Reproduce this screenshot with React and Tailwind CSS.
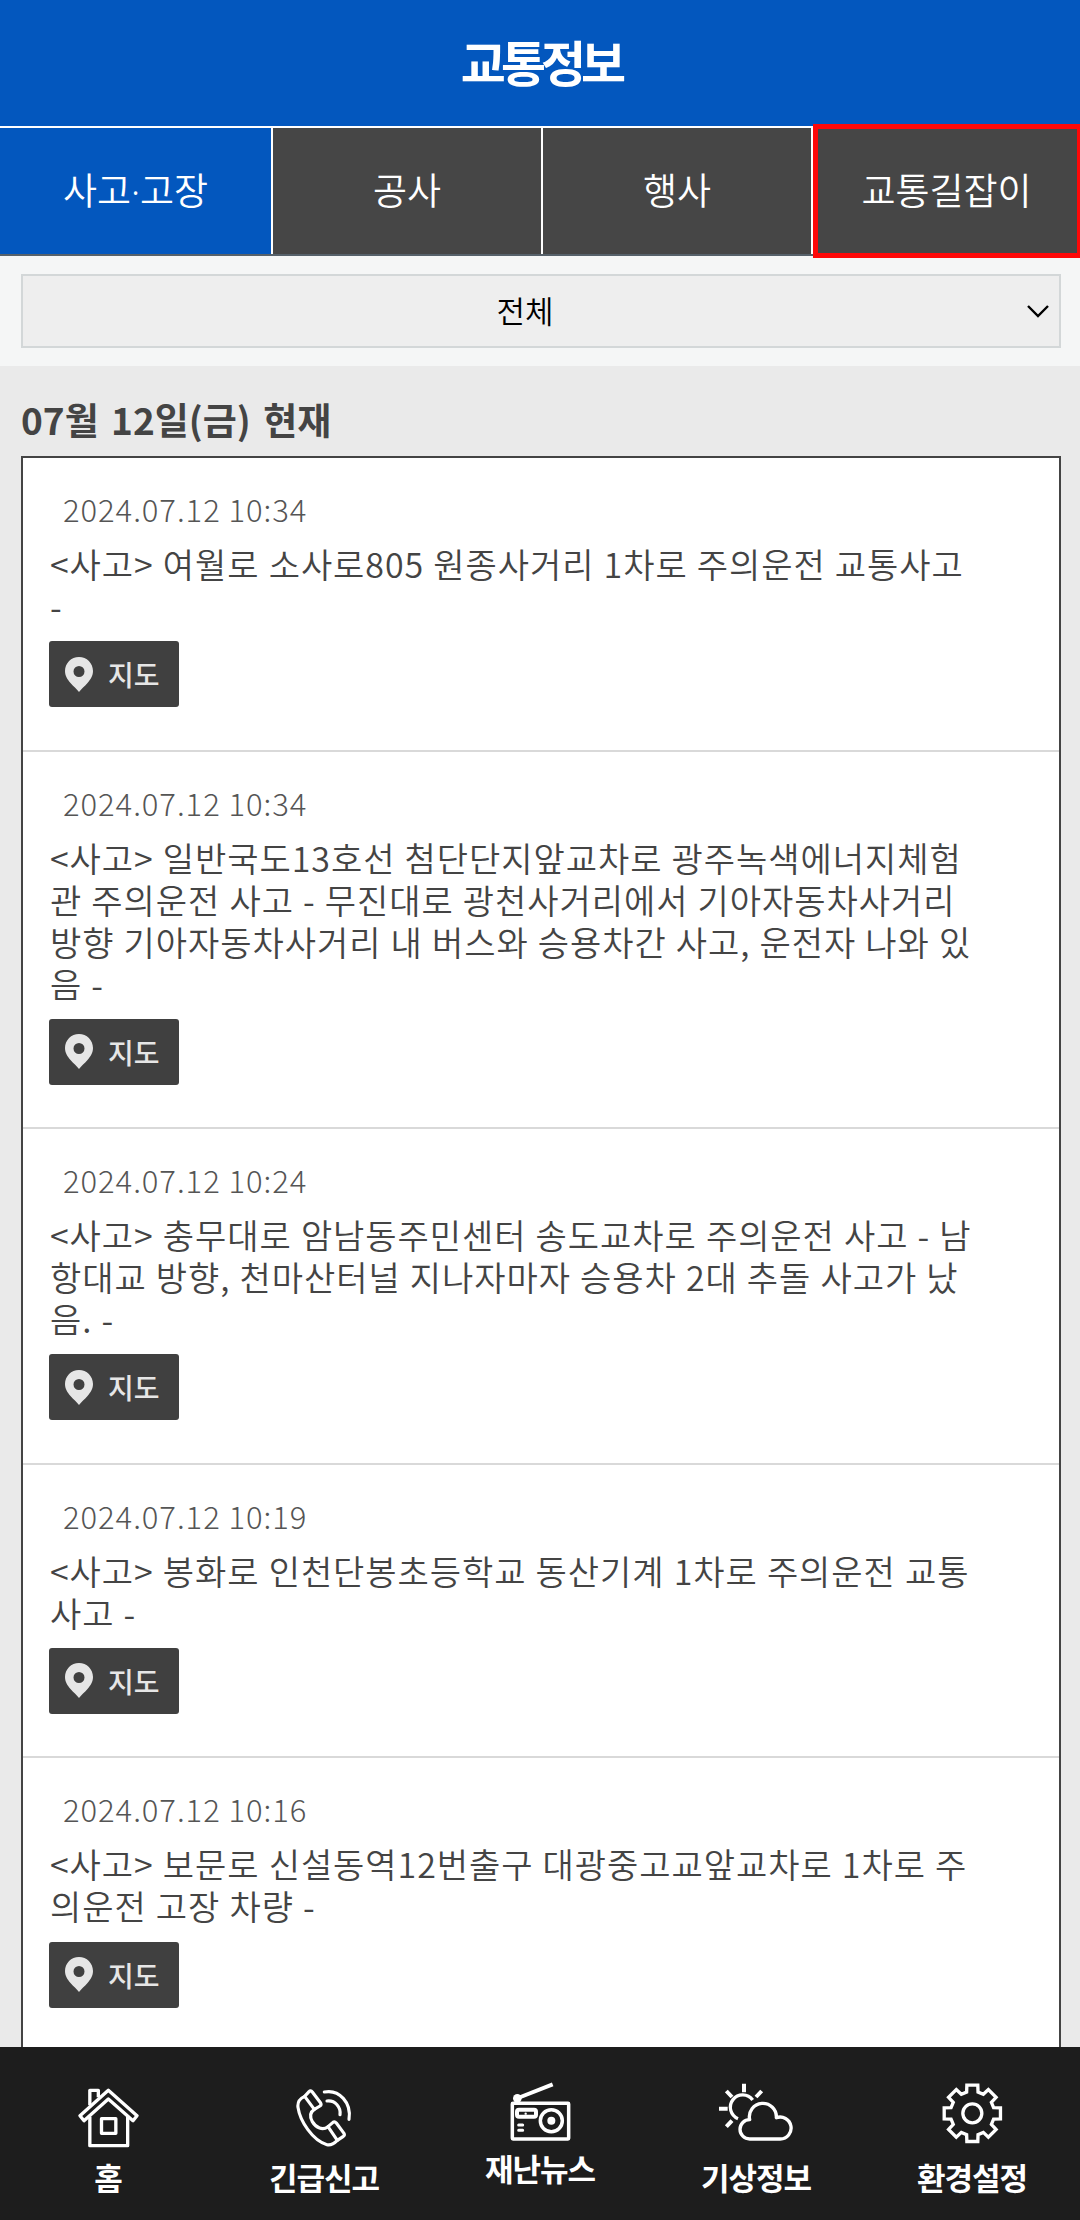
import React, { useState } from 'react';

const tabs = [
  { label: '사고·고장', width: 'w-[273px]' },
  { label: '공사', width: 'w-[270px]' },
  { label: '행사', width: 'w-[270px]' },
  { label: '교통길잡이', width: 'w-[267px]' },
];

const incidents = [
  {
    date: '2024.07.12 10:34',
    lines: ['<사고> 여월로 소사로805 원종사거리 1차로 주의운전 교통사고', '-'],
  },
  {
    date: '2024.07.12 10:34',
    lines: [
      '<사고> 일반국도13호선 첨단단지앞교차로 광주녹색에너지체험',
      '관 주의운전 사고 - 무진대로 광천사거리에서 기아자동차사거리',
      '방향 기아자동차사거리 내 버스와 승용차간 사고, 운전자 나와 있',
      '음 -',
    ],
  },
  {
    date: '2024.07.12 10:24',
    lines: [
      '<사고> 충무대로 암남동주민센터 송도교차로 주의운전 사고 - 남',
      '항대교 방향, 천마산터널 지나자마자 승용차 2대 추돌 사고가 났',
      '음. -',
    ],
  },
  {
    date: '2024.07.12 10:19',
    lines: ['<사고> 봉화로 인천단봉초등학교 동산기계 1차로 주의운전 교통', '사고 -'],
  },
  {
    date: '2024.07.12 10:16',
    lines: ['<사고> 보문로 신설동역12번출구 대광중고교앞교차로 1차로 주', '의운전 고장 차량 -'],
  },
];

// Outline of the eight-toothed gear, centred on 91,91
const gearPoints = Array.from({ length: 8 }, (_, i) =>
  [[-15, 66], [-11, 86], [11, 86], [15, 66]]
    .map(([deg, r]) => {
      const a = ((i * 45 + deg) * Math.PI) / 180;
      return `${(91 + r * Math.sin(a)).toFixed(1)},${(91 - r * Math.cos(a)).toFixed(1)}`;
    })
    .join(' ')
).join(' ');

function HomeIcon() {
  return (
    <svg viewBox="0 0 183 180" className="h-[60px] w-[61px]" fill="none" stroke="white" strokeWidth="10" strokeLinejoin="round">
      <path d="M35.5 52V7H61V28" />
      <path d="M91 7L177 83L165 98L91 33L18 98L6 83Z" />
      <path d="M35.5 86V173H149V86" />
      <rect x="70.5" y="92" width="43" height="44" />
    </svg>
  );
}

function PhoneIcon() {
  return (
    <svg viewBox="0 0 171 177" className="h-[59px] w-[57px]" fill="none" stroke="white" strokeWidth="9.5" strokeLinejoin="round" strokeLinecap="round">
      <path d="M26 25L39 11Q44 6 49 12L74 45Q77 50 72 54L55 64Z" />
      <path d="M96 116L111 103Q116 99 121 105L144 136Q147 141 142 145L124 157Z" />
      <path d="M26 25C9 33 4 42 6 58C12 99 50 158 93 170C105 173 115 166 124 157" />
      <path d="M55 64C40 74 42 88 49 101C60 120 80 128 96 116" />
      <path d="M85 12C130 3 167 45 159 94" />
      <path d="M93 39C118 36 135 58 132 80" />
    </svg>
  );
}

function RadioIcon() {
  return (
    <svg viewBox="0 0 183 177" className="h-[59px] w-[61px]" fill="none" stroke="white" strokeWidth="10.5" strokeLinejoin="round">
      <path d="M24 48L128 7" strokeWidth="12" />
      <circle cx="22" cy="49" r="13" fill="white" stroke="none" />
      <rect x="7" y="64" width="169" height="107" rx="2" />
      <rect x="21" y="83" width="57" height="21" rx="6" strokeWidth="12" />
      <circle cx="47" cy="95" r="3.5" fill="white" stroke="none" />
      <circle cx="124" cy="116" r="33" />
      <circle cx="124" cy="116" r="12" fill="white" stroke="none" />
      <path d="M26 129h12M26 145h12" strokeLinecap="round" strokeWidth="9" />
    </svg>
  );
}

function WeatherIcon() {
  return (
    <svg viewBox="0 0 225 177" className="h-[59px] w-[75px]" fill="none" stroke="white" strokeWidth="10" strokeLinejoin="round">
      <path d="M75 2v26M22 24l17 18M128 24l-17 18M0 77h26M22 131l17-18" strokeWidth="12" />
      <path d="M101 51A37 37 0 1 0 57 107" />
      <path d="M92 168H184A33 33 0 1 0 172 104A40.5 40.5 0 1 0 92 110A29 29 0 0 0 92 168Z" />
    </svg>
  );
}

function GearIcon() {
  return (
    <svg viewBox="0 0 183 183" className="size-[61px]" fill="none" stroke="white" strokeWidth="10">
      <polygon points={gearPoints} />
      <circle cx="91" cy="91" r="28.5" />
    </svg>
  );
}

function PinIcon() {
  return (
    <svg viewBox="0 0 28 35" className="h-[35px] w-7">
      <path
        fill="#e6e6e6"
        fillRule="evenodd"
        d="M14 0C6.2 0 0 6.2 0 14C0 19 2.5 22.5 5.5 26C8.5 29.3 11.5 32 14 35C16.5 32 19.5 29.3 22.5 26C25.5 22.5 28 19 28 14C28 6.2 21.8 0 14 0ZM14 9A5.5 5.5 0 1 1 14 20A5.5 5.5 0 1 1 14 9Z"
      />
    </svg>
  );
}

const menu = [
  { label: '홈', icon: <HomeIcon />, top: 'pt-[41px]', gap: 'mt-[8px]' },
  { label: '긴급신고', icon: <PhoneIcon />, top: 'pt-[41px]', gap: 'mt-[9px]' },
  { label: '재난뉴스', icon: <RadioIcon />, top: 'pt-[35px]', gap: 'mt-[6px]' },
  { label: '기상정보', icon: <WeatherIcon />, top: 'pt-[36px]', gap: 'mt-[14px]' },
  { label: '환경설정', icon: <GearIcon />, top: 'pt-[36px]', gap: 'mt-[12px]' },
];

function Incident({ date, lines }) {
  return (
    <li className="border-b-2 border-[#d9d9d9] px-[26px] pt-[30px] pb-[42.4px]">
      <p className="h-[42px] pl-[14px] text-[31px] leading-[42px] font-light tracking-[0.95px] text-[#555]">{date}</p>
      <p className="mt-[13px] pl-[1px] text-[34px] leading-[42px] font-[350] tracking-[0.95px] [word-spacing:0.6px] whitespace-pre text-[#444]">
        {lines.join('\n')}
      </p>
      <button className="mt-[14.2px] flex h-[66px] w-[130px] items-center rounded-[3px] bg-[#404040] pl-4 text-[28px] text-[#e6e6e6]">
        <PinIcon />
        <span className="ml-[15px] leading-none font-medium">지도</span>
      </button>
    </li>
  );
}

export default function App() {
  const [active, setActive] = useState(0);

  return (
    <div className="flex h-[2220px] w-[1080px] flex-col overflow-hidden bg-[#eaeaea] font-['Noto_Sans_CJK_KR',sans-serif]">
      <header className="flex h-[126px] shrink-0 items-center justify-center bg-[#0357be] pb-[5px]">
        <h1 className="pl-0.5 text-[49px] leading-none font-bold tracking-[-5px] text-white">교통정보</h1>
      </header>

      {/* Pestañas */}
      <nav className="relative flex h-[130px] shrink-0 border-t-2 border-b-2 border-t-white border-b-[#56616a] bg-[#464646]">
        {tabs.map((tab, i) => (
          <button
            key={tab.label}
            onClick={() => setActive(i)}
            className={`flex items-center justify-center font-['Noto_Sans','Noto_Sans_CJK_KR',sans-serif] text-[37px] leading-[54px] font-[350] text-white ${tab.width} ${i < 3 ? 'border-r-2 border-white' : ''} ${active === i ? 'bg-[#0357be]' : ''}`}
          >
            {tab.label}
          </button>
        ))}
        <span className="pointer-events-none absolute -top-1 left-[813px] h-[134px] w-[269px] border-[5px] border-[#fe0808]" />
      </nav>

      <div className="h-[110px] shrink-0 bg-[#f5f6f6] pt-[18px] pr-[19px] pl-[21px]">
        <button className="flex h-[74px] w-full items-center justify-end border-2 border-[#d3d7d8] bg-[#eee] pr-[10px] text-[31px] text-black">
          <span className="flex-1 pb-0.5 text-center font-[350]">전체</span>
          <svg viewBox="0 0 22 13" className="h-[13px] w-[22px]" fill="none" stroke="black" strokeWidth="2.4">
            <path d="M1 1L11 11L21 1" />
          </svg>
        </button>
      </div>

      <main className="min-h-0 flex-1 overflow-hidden pr-[19px] pl-[21px]">
        <h2 className="h-[90px] pt-[32px] text-[37px] leading-[42px] font-bold [word-spacing:4px] text-[#444]">07월 12일(금) 현재</h2>
        <ul className="border-2 border-[#444] bg-white">
          {incidents.map((item, i) => (
            <Incident key={i} {...item} />
          ))}
        </ul>
      </main>

      <footer className="flex h-[173px] shrink-0 bg-[#1d1d1d]">
        {menu.map((item) => (
          <a key={item.label} className={`flex flex-1 flex-col items-center ${item.top}`}>
            {item.icon}
            <span className={`text-[31px] leading-[42px] font-bold tracking-[-1px] text-white ${item.gap}`}>{item.label}</span>
          </a>
        ))}
      </footer>
    </div>
  );
}
